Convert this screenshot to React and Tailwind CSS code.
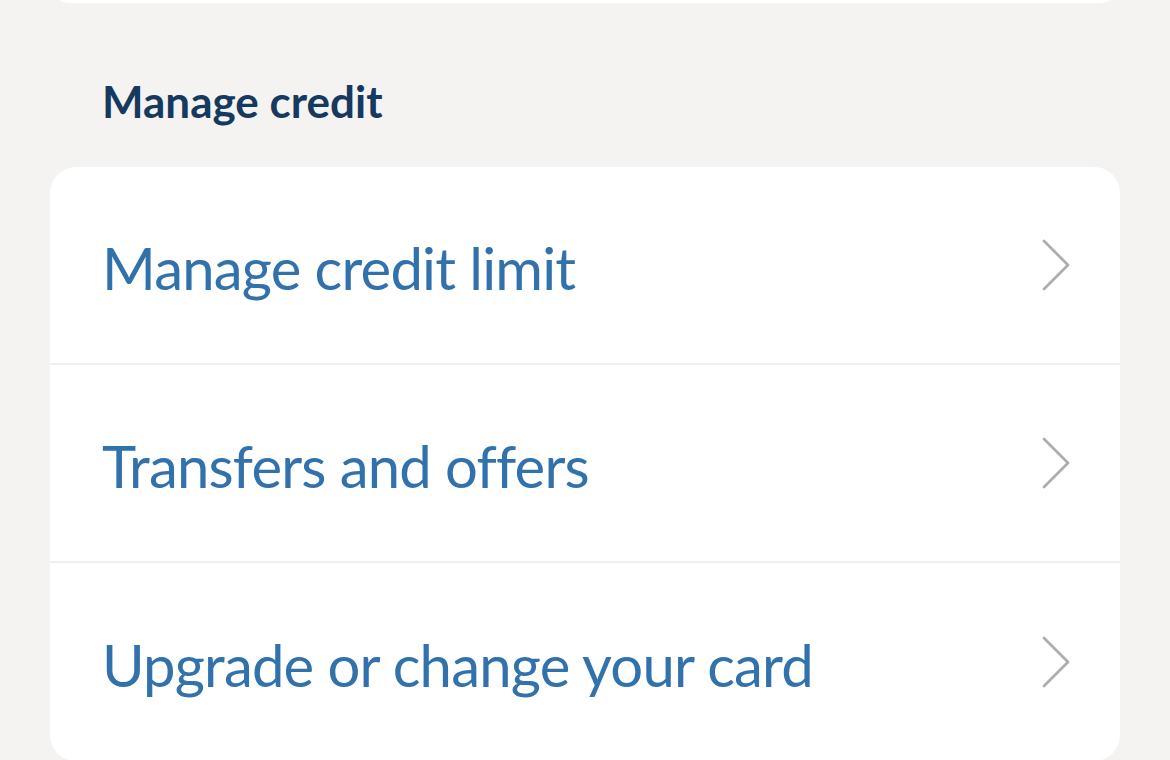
import React from "react";

function Chevron() {
  return (
    <svg width="30" height="52" viewBox="0 0 30 52" fill="none" className="shrink-0">
      <path d="M3 2 L27 26 L3 50" stroke="#adadad" strokeWidth="2.8" strokeLinecap="round" strokeLinejoin="round" />
    </svg>
  );
}

function Row({ label, last }) {
  return (
    <div className={`flex items-center justify-between pl-[52px] pr-[49px] h-[198px] ${last ? "" : "border-b-2 border-[#f1f0ee]"}`}>
      <span className="text-[58px] leading-none text-[#3272ac] pt-[6px] tracking-[-0.8px]" style={{ fontFamily: 'Lato, "Open Sans", sans-serif' }}>{label}</span>
      <Chevron />
    </div>
  );
}

export default function App() {
  return (
    <div className="w-[1170px] h-[760px] overflow-hidden bg-[#f4f3f1]" style={{ fontFamily: '"Open Sans", "Noto Sans", sans-serif' }}>
      <div className="px-[50px]">
        <div className="h-[40px] -mt-[37px] bg-white rounded-[24px]" />
        <h2 className="pl-[52px] pt-[74px] pb-[41px] text-[44px] leading-[49px] font-bold text-[#163a5f]" style={{ fontFamily: 'Lato, "Open Sans", sans-serif' }}>Manage credit</h2>
        <div className="bg-white rounded-[26px] overflow-hidden">
          <Row label="Manage credit limit" />
          <Row label="Transfers and offers" />
          <Row label="Upgrade or change your card" last />
        </div>
      </div>
    </div>
  );
}
